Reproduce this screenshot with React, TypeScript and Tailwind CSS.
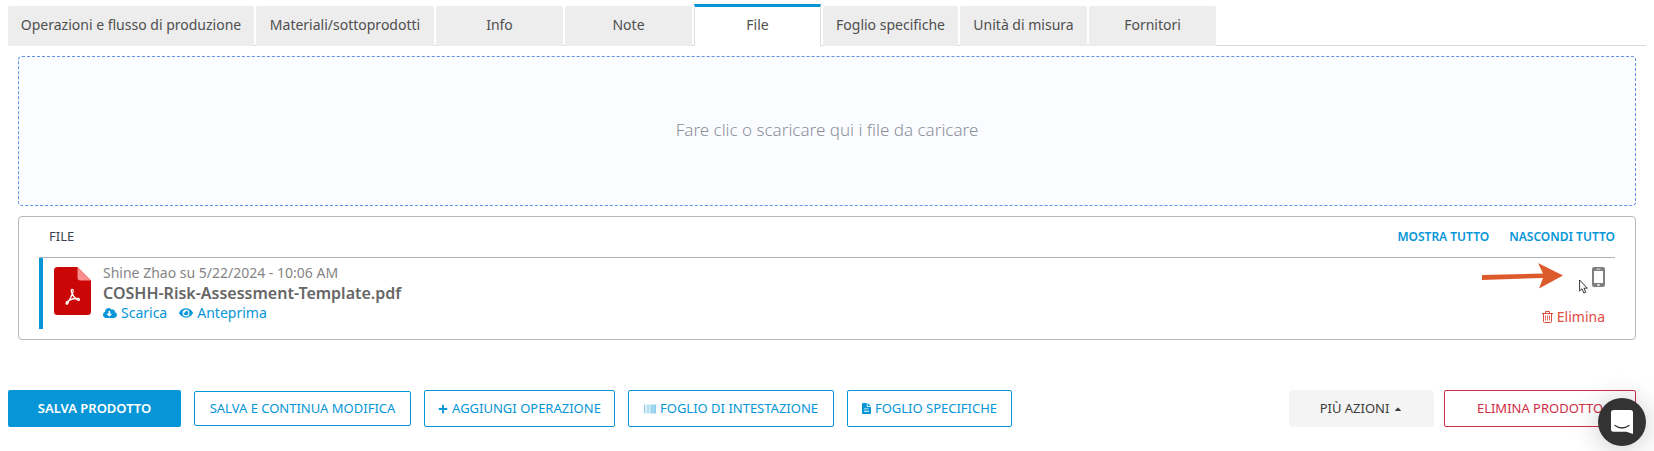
import type { ReactNode } from "react";
import { FaCloudDownloadAlt, FaEye, FaPlus, FaBarcode, FaCaretUp } from "react-icons/fa";

const tabs = [
  { label: "Operazioni e flusso di produzione", width: "w-[246px]" },
  { label: "Materiali/sottoprodotti", width: "w-[178px]" },
  { label: "Info", width: "w-[127px]" },
  { label: "Note", width: "w-[127px]" },
  { label: "File", width: "w-[127px]", active: true },
  { label: "Foglio specifiche", width: "w-[135px]" },
  { label: "Unità di misura", width: "w-[127px]" },
  { label: "Fornitori", width: "w-[127px]" },
];

function Tabs() {
  return (
    <nav role="tablist" className="flex items-end gap-0.5 border-b border-[#d9dadb] pt-1">
      {tabs.map((tab) => (
        <button
          key={tab.label}
          type="button"
          role="tab"
          aria-selected={!!tab.active}
          className={`${tab.width} -mb-px shrink-0 whitespace-nowrap text-sm text-[#4f4f4f] ${
            tab.active
              ? "h-[42px] border-x border-t-3 border-x-[#dcdddd] border-t-[#0696d7] bg-white pb-1"
              : "h-10 rounded-t-xs bg-[#ededed] pb-0.5"
          }`}
        >
          {tab.label}
        </button>
      ))}
    </nav>
  );
}

function PdfIcon() {
  return (
    <svg viewBox="0 0 37 48" className="h-12 w-[37px] shrink-0" aria-hidden="true">
      <path d="M3.500 0H23.500L37 13.500V44.500A3.500 3.500 0 0 1 33.500 48H3.500A3.500 3.500 0 0 1 0 44.500V3.500A3.500 3.500 0 0 1 3.500 0Z" fill="#cb0606" />
      <path d="M23.500 0L37 13.500H26.500A3 3 0 0 1 23.500 10.500Z" fill="#fb8d8d" />
      <path
        d="M18.300 26.500C17 25 16.800 22.300 18.200 22.300C19.600 22.300 19.400 25 18.300 26.500ZM18.300 26.500C17.500 29.500 16 32 14.700 34M18.300 26.500C19 29 20.500 30.800 22 31.500M15 33.500C17 32.300 19.500 31.600 22 31.500M14.700 34C13.500 34.300 12 35.500 12.200 36.700C12.700 38 14.500 36.500 14.700 34ZM22 31.500C23.500 31 25.500 31.500 25.400 32.700C25 34 23 33 22 31.500Z"
        fill="none"
        stroke="#fff"
        strokeWidth="1.300"
        strokeLinejoin="round"
        strokeLinecap="round"
      />
    </svg>
  );
}

function TrashIcon() {
  return (
    <svg viewBox="0 0 11 12" className="h-3 w-[11px]" fill="none" stroke="currentColor" aria-hidden="true">
      <path d="M0 2.500H11M3.500 2.500V.5H7.500V2.500M1.500 2.500V10.500Q1.500 11.500 2.500 11.500H8.500Q9.500 11.500 9.500 10.500V2.500" />
      <path d="M3.500 4.500V9.500M5.500 4.500V9.500M7.500 4.500V9.500" strokeWidth=".8" />
    </svg>
  );
}

function PhoneIcon() {
  return (
    <svg viewBox="0 0 13 20" className="h-5 w-[13px]" aria-hidden="true">
      <path
        fillRule="evenodd"
        fill="#808080"
        d="M2 0H11A2 2 0 0 1 13 2V18A2 2 0 0 1 11 20H2A2 2 0 0 1 0 18V2A2 2 0 0 1 2 0ZM2 4V16H11V4ZM4.500 1.800V2.600H8.500V1.800ZM5.300 17.200V18.800H7.700V17.200Z"
      />
    </svg>
  );
}

function Pointer() {
  return (
    <svg viewBox="0 0 9 15" className="h-[15px] w-[9px]" aria-hidden="true">
      <path d="M.6 1V12L3 9.800L4.900 14L6.700 13.200L5 9.200H8.300Z" fill="#fff" stroke="#222" strokeWidth=".9" />
    </svg>
  );
}

function Arrow() {
  return (
    <svg viewBox="0 0 81 26" className="h-[26px] w-[81px]" aria-hidden="true">
      <path d="M0 12L61 10.500L56 0L81 12.500L57 25.500L61 15L0 17Z" fill="#dd5a2d" />
    </svg>
  );
}

function SheetIcon() {
  return (
    <svg viewBox="0 0 9 11" className="h-[11px] w-[9px]" aria-hidden="true">
      <path
        fillRule="evenodd"
        fill="currentColor"
        d="M.8 0H4.800V3.400Q4.800 4 5.400 4H9V10.200Q9 11 8.200 11H.8Q0 11 0 10.200V.8Q0 0 .8 0ZM5.600 0L9 3.300H5.600ZM2 5.500V6.300H6.500V5.500ZM2 7.700V8.700H7V7.700Z"
      />
    </svg>
  );
}

function OutlineButton({ width, height = "h-[37px]", children }: { width: string; height?: string; children: ReactNode }) {
  return (
    <button
      type="button"
      className={`${width} ${height} flex shrink-0 items-center justify-center gap-1 whitespace-nowrap rounded-xs border border-[#0696d7] bg-white text-[13px] text-[#0696d7]`}
    >
      {children}
    </button>
  );
}

export default function App() {
  return (
    <div className="bg-white px-2 font-['Noto_Sans','Open_Sans',sans-serif]">
      <Tabs />

      <main className="px-2.5 pt-2.5">
        <label className="flex h-[150px] cursor-pointer items-center justify-center rounded-sm border border-dashed border-[#6490e8] bg-[#fbfcff] pb-0.5 text-[17px] font-light text-[#8b919c]">
          Fare clic o scaricare qui i file da caricare
          <input type="file" multiple className="sr-only" />
        </label>

        <section className="mt-2.5 rounded-sm border border-[#b6b8c0] px-5 pb-2.5">
          <header className="flex h-[41px] items-center justify-between border-b border-[#b0b3bb] pl-2.5">
            <h2 className="text-[13px] text-[#3c4353]">FILE</h2>
            <div className="flex gap-5 text-xs font-semibold text-[#0696d7]">
              <button type="button">MOSTRA TUTTO</button>
              <button type="button">NASCONDI TUTTO</button>
            </div>
          </header>

          <article className="flex h-[71px] justify-between border-l-4 border-[#0696d7] pl-[11px] pr-2.5">
            <div className="flex gap-3 pt-[9px]">
              <PdfIcon />
              <div className="-mt-1 flex flex-col">
                <p className="text-sm leading-5 text-[#858585]">Shine Zhao su 5/22/2024 - 10:06 AM</p>
                <h3 className="text-base leading-5 font-semibold text-[#666]">COSHH-Risk-Assessment-Template.pdf</h3>
                <div className="flex gap-3 text-sm leading-5 text-[#0696d7]">
                  <a href="#scarica" className="flex items-center gap-1">
                    <FaCloudDownloadAlt className="size-3.5" />
                    Scarica
                  </a>
                  <a href="#anteprima" className="flex items-center gap-1">
                    <FaEye className="size-3.5" />
                    Anteprima
                  </a>
                </div>
              </div>
            </div>

            <div className="flex flex-col items-end justify-between pt-[5px] pb-0.5">
              <div className="flex items-start">
                <Arrow />
                <span className="mt-4 ml-4">
                  <Pointer />
                </span>
                <button type="button" aria-label="Dispositivo mobile" className="mt-1 ml-1 cursor-pointer">
                  <PhoneIcon />
                </button>
              </div>
              <button type="button" className="flex items-center gap-1 text-sm leading-5 text-[#df4b3f]">
                <TrashIcon />
                Elimina
              </button>
            </div>
          </article>
        </section>
      </main>

      <footer className="mt-[50px] flex items-center justify-between pr-2.5">
        <div className="flex items-center gap-[13px]">
          <button type="button" className="h-[37px] w-[173px] shrink-0 rounded-xs bg-[#0696d7] text-[13px] font-semibold text-white">
            SALVA PRODOTTO
          </button>
          <OutlineButton width="w-[217px]" height="h-[35px]">
            SALVA E CONTINUA MODIFICA
          </OutlineButton>
          <OutlineButton width="w-[191px]">
            <FaPlus className="size-2.5" />
            AGGIUNGI OPERAZIONE
          </OutlineButton>
          <OutlineButton width="w-[206px]">
            <FaBarcode className="size-3 opacity-70" />
            FOGLIO DI INTESTAZIONE
          </OutlineButton>
          <OutlineButton width="w-[165px]">
            <SheetIcon />
            FOGLIO SPECIFICHE
          </OutlineButton>
        </div>
        <div className="flex gap-2.5">
          <button
            type="button"
            className="flex h-[37px] w-[145px] items-center justify-center gap-1 rounded-sm bg-[#f4f4f4] text-[13px] text-[#3c3c3c]"
          >
            PIÙ AZIONI
            <FaCaretUp className="size-2.5" />
          </button>
          <button type="button" className="h-[37px] w-[192px] rounded-xs border border-[#d12e48] text-[13px] text-[#d12e48]">
            ELIMINA PRODOTTO
          </button>
        </div>
      </footer>

      <button
        type="button"
        aria-label="Chat"
        className="fixed right-2 bottom-[5px] flex size-12 items-center justify-center rounded-full bg-[#333] shadow-[0_2px_28px_rgba(0,0,0,0.22)]"
      >
        <svg viewBox="0 0 22 24" className="h-6 w-[22px]" aria-hidden="true">
          <path d="M2.500 0H19.500A2.500 2.500 0 0 1 22 2.500V24L15.500 21.700H2.500A2.500 2.500 0 0 1 0 19.200V2.500A2.500 2.500 0 0 1 2.500 0Z" fill="#fff" />
          <path d="M4 15.500Q11 20.500 18 15.500" fill="none" stroke="#333" strokeWidth="1.300" strokeLinecap="round" />
        </svg>
      </button>
    </div>
  );
}
